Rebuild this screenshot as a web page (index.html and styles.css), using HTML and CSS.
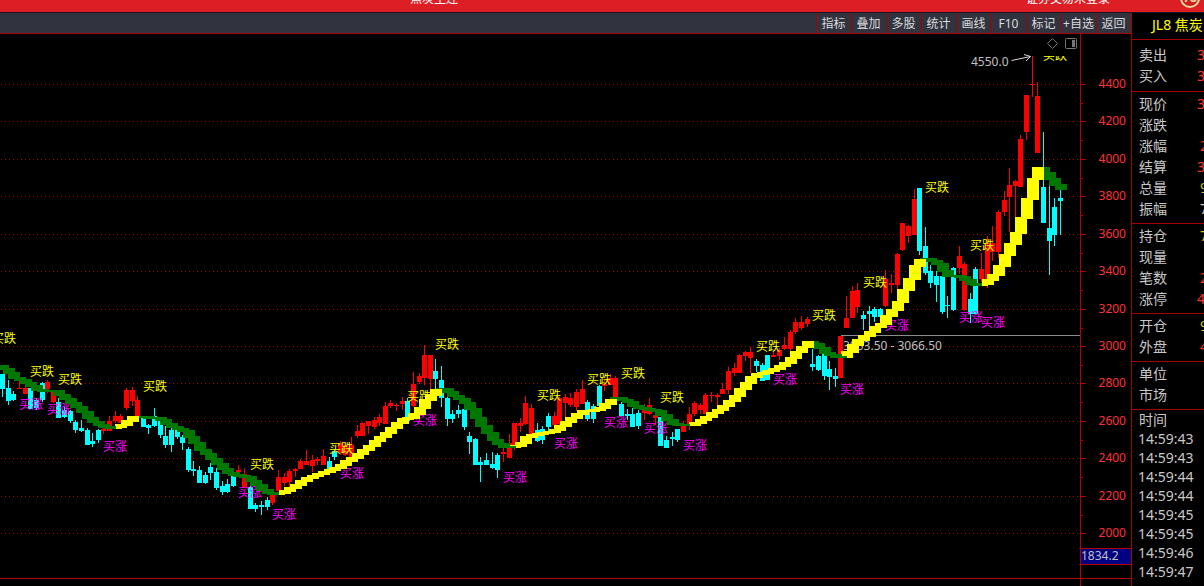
FILE: index.html
```html
<!DOCTYPE html>
<html lang="zh-CN">
<head>
<meta charset="utf-8">
<title>JL8 焦炭</title>
<link rel="stylesheet" href="styles.css">
</head>
<body>
<header class="titlebar">
  <span class="title-name">焦炭主连</span>
  <span class="title-status">证券交易未登录</span>
  <span class="title-badge">78</span>
</header>
<div class="workspace">
  <main class="main">
    <nav class="toolbar">
      <button type="button">指标</button>
      <button type="button">叠加</button>
      <button type="button">多股</button>
      <button type="button">统计</button>
      <button type="button">画线</button>
      <button type="button">F10</button>
      <button type="button">标记</button>
      <button type="button">+自选</button>
      <button type="button">返回</button>
    </nav>
    <svg class="chart" id="chart" viewBox="0 34 1131 552" preserveAspectRatio="xMinYMin meet">
      <defs><clipPath id="plot"><rect x="0" y="56" width="1080" height="520"/></clipPath></defs>
      <g id="grid"></g>
      <g id="candles"></g>
      <g id="notes">
        <path d="M841 335.5H1080" stroke="#8c8c8c"/>
        <text class="note" x="843" y="350">3053.50 - 3066.50</text>
        <text class="note" x="971" y="66">4550.0</text>
        <path class="arrow" d="M1011.5 60.5L1030.500 56.500M1024 54.500L1030.500 56.500L1026 61"/>
        <path class="glyph" d="M1047.500 43.500L1052.500 38.500L1057.500 43.500L1052.500 48.500Z"/>
        <rect class="glyph" x="1065.500" y="38.500" width="11" height="10" rx="1"/>
        <rect x="1072" y="40" width="3" height="7" fill="#777"/>
      </g>
      <g id="labels" clip-path="url(#plot)"></g>
      <g id="ribbon"></g>
      <g id="axis"></g>
    </svg>
  </main>
  <aside class="quote">
    <h1 class="quote-title">JL8 焦炭</h1>
    <dl class="group group-first">
      <div><dt>卖出</dt><dd>3</dd></div>
      <div><dt>买入</dt><dd>3</dd></div>
    </dl>
    <dl class="group">
      <div><dt>现价</dt><dd>3</dd></div>
      <div><dt>涨跌</dt><dd></dd></div>
      <div><dt>涨幅</dt><dd class="short">2</dd></div>
      <div><dt>结算</dt><dd>3</dd></div>
      <div><dt>总量</dt><dd class="short volume">9</dd></div>
      <div><dt>振幅</dt><dd class="short plain">7</dd></div>
    </dl>
    <dl class="group">
      <div><dt>持仓</dt><dd class="short volume">7</dd></div>
      <div><dt>现量</dt><dd></dd></div>
      <div><dt>笔数</dt><dd class="short">2</dd></div>
      <div><dt>涨停</dt><dd>4</dd></div>
    </dl>
    <dl class="group">
      <div><dt>开仓</dt><dd class="short volume">9</dd></div>
      <div><dt>外盘</dt><dd class="short">4</dd></div>
    </dl>
    <dl class="group">
      <div><dt>单位</dt><dd></dd></div>
      <div><dt>市场</dt><dd></dd></div>
    </dl>
    <h2 class="ticks-title">时间</h2>
    <ol class="ticks">
      <li>14:59:43</li><li>14:59:43</li><li>14:59:44</li><li>14:59:44</li>
      <li>14:59:45</li><li>14:59:45</li><li>14:59:46</li><li>14:59:47</li><li>14:59:48</li>
    </ol>
  </aside>
</div>
<script src="chart.js"></script>
</body>
</html>
```

FILE: styles.css
```css
* { box-sizing: border-box; }

body {
  margin: 0;
  height: 100vh;
  overflow: hidden;
  display: flex;
  flex-direction: column;
  background: #000;
  color: #c8c8c8;
  font-family: "Noto Sans", "Noto Sans CJK SC", sans-serif;
  font-size: 12px;
}

.titlebar {
  flex: none;
  display: flex;
  align-items: flex-end;
  height: 13px;
  overflow: hidden;
  background: #dd1e25;
  border-bottom: 1px solid #1c1420;
  color: #fff;
  line-height: 18px;
}
.title-name { margin-left: 410px; margin-bottom: 4px; }
.title-status { margin-left: auto; margin-bottom: 4px; }
.title-badge {
  flex: none;
  width: 20px;
  height: 20px;
  margin: 0 4px 4px 70px;
  border: 2px solid #f3d7a2;
  border-radius: 50%;
  background: #c8201c;
  color: #f3d7a2;
  font-weight: 700;
  line-height: 16px;
  text-align: center;
}

.workspace {
  flex: 1;
  min-height: 0;
  display: grid;
  grid-template-columns: minmax(0, 1fr) 73px;
}
.main {
  display: flex;
  flex-direction: column;
  min-height: 0;
}

.toolbar {
  flex: none;
  display: flex;
  justify-content: flex-end;
  height: 21px;
  background: #31333f;
  border-bottom: 1px solid #a80000;
}
.toolbar button {
  width: 35px;
  padding: 0 1px 0 0;
  border: 0;
  border-left: 1px solid #a80000;
  background: none;
  color: #dcdcdc;
  font: inherit;
  white-space: nowrap;
}

.chart {
  display: block;
  flex: 1;
  width: 100%;
  min-height: 0;
}
.chart text { font-size: 12px; }
.fall { fill: #ff0; }
.rise { fill: #f0f; }
.note { fill: #c0c0c0; }
.price { fill: #ff3232; text-anchor: end; }
.arrow { fill: none; stroke: #d8d8d8; }
.glyph { fill: none; stroke: #777; }
.gridline { stroke: #a00000; stroke-dasharray: 1 3; }
.frame { fill: none; stroke: #b40000; }
.cursor-box { fill: #000080; }

.quote {
  overflow: hidden;
  border-left: 1px solid #a80000;
  font-size: 14px;
  white-space: nowrap;
}
.quote-title {
  height: 27px;
  margin: 0;
  padding-left: 20px;
  border-bottom: 1px solid #a80000;
  color: #ff0;
  font-size: 14px;
  font-weight: 400;
  line-height: 24px;
}
.group {
  margin: 0;
  padding: 2px 0 3px 7px;
  border-bottom: 1px solid #a80000;
}
.group-first { padding: 5px 0 4px 7px; }
.group div {
  display: flex;
  height: 21px;
  line-height: 19px;
}
.group dt { width: 58px; flex: none; }
.group dd { margin: 0; color: #ff3232; }
.group .short { padding-left: 3px; }
.group .volume { color: #c8c800; }
.group .plain { color: #c8c8c8; }
.ticks-title {
  height: 19px;
  margin: 0;
  padding-left: 7px;
  font-size: 14px;
  font-weight: 400;
  line-height: 20px;
}
.ticks {
  margin: 0;
  padding: 0 0 0 6px;
  list-style: none;
  line-height: 19px;
}
```

FILE: chart.js
```js
// Each candle: x, high, body top, body bottom, low; "r" is red and "c" is cyan.
const candles = `
2 374 374 389 397 c|8 380 388 401 405 c|13 391 394 400 401 c|19 381 388 389 389 r|25 386 388 394 394 r
30 388 388 409 409 c|36 398 400 408 410 c|42 382 383 400 402 c|47 380 382 389 393 r|53 390 390 402 403 r
58 398 402 418 418 c|64 407 410 417 418 c|70 410 411 421 423 c|75 420 422 430 433 c|81 420 428 431 432 c
87 428 430 445 445 c|92 433 441 444 447 c|98 429 430 440 443 c|103 426 429 431 434 r|109 416 421 431 431 r
115 411 416 421 423 r|120 414 416 423 423 r|126 388 390 408 410 r|132 387 390 401 406 r|137 396 400 418 422 r
143 417 417 427 427 c|148 424 425 428 434 c|154 408 416 426 427 c|160 419 420 435 438 c|165 426 436 445 448 c
171 428 430 445 452 c|177 427 430 437 439 c|182 435 437 443 450 c|188 447 449 470 472 c|193 461 469 471 476 c
199 466 470 483 483 c|205 472 475 483 484 c|210 463 467 473 480 c|216 468 472 488 490 c|222 481 486 492 495 c
227 479 484 492 493 c|233 473 474 486 487 c|238 465 470 472 473 r|244 468 474 487 487 r|250 486 487 509 509 c
255 503 505 509 512 c|261 501 505 507 515 c|267 497 500 507 510 c|272 492 493 503 505 r|278 470 477 491 491 r
284 473 477 483 486 r|289 469 471 482 487 r|295 468 469 471 477 r|300 459 461 469 469 r|306 450 461 465 465 r
312 455 460 466 472 r|317 457 459 461 465 r|323 449 456 465 465 r|329 457 461 469 474 c|334 450 451 457 460 c
340 441 443 453 455 r|345 443 445 455 456 r|351 437 445 457 457 r|357 425 431 436 438 r|362 422 423 436 436 r
368 421 421 426 434 r|374 417 420 427 429 r|379 414 417 423 426 r|385 402 406 424 424 r|390 400 403 406 408 r
396 403 405 406 411 r|402 397 401 404 410 r|407 398 401 421 421 c|413 372 384 406 407 r|419 373 376 382 384 r
424 345 355 378 385 r|430 355 355 379 390 r|435 359 371 379 390 c|441 366 380 398 407 c|447 396 398 419 426 c
452 410 414 419 423 c|458 405 410 414 418 c|464 408 409 427 430 c|469 432 436 442 454 c|475 438 439 465 465 c
480 457 462 465 482 c|486 453 460 465 465 c|492 452 464 468 469 c|497 453 455 470 478 c|503 447 452 454 462 r
509 434 443 458 458 r|514 423 423 447 450 r|520 418 423 426 432 r|525 396 403 424 425 r|531 404 408 435 435 r
537 423 430 441 442 c|542 426 429 440 444 c|548 413 416 427 431 c|554 412 416 425 430 r|559 397 398 424 428 r
565 394 397 403 418 r|570 393 398 405 407 r|576 389 392 407 411 r|582 380 389 404 404 r|587 400 402 419 421 c
593 404 406 419 423 c|599 385 386 406 406 c|604 380 384 386 391 r|610 374 378 385 385 r|615 376 378 398 401 r
621 402 404 416 416 c|627 409 414 416 420 c|632 408 414 427 427 c|638 410 413 426 429 c|644 404 407 413 420 r
649 398 405 414 415 r|655 413 415 418 425 r|660 417 417 446 446 c|666 436 440 448 448 c|672 432 437 439 446 c
677 429 429 440 442 c|683 421 425 432 432 r|689 407 414 424 430 r|694 401 403 414 416 r|700 403 405 410 414 r
705 393 395 414 414 r|711 392 395 396 402 r|717 393 395 397 405 r|722 383 389 394 394 r|728 367 371 390 394 r
734 363 368 373 376 r|739 354 355 373 373 r|745 351 352 356 361 r|750 347 352 358 373 r|756 359 361 366 372 c
762 363 365 381 381 c|767 355 355 380 380 c|773 351 355 357 357 r|779 348 350 356 360 r|784 337 345 349 350 r
790 330 332 349 352 r|795 318 322 332 334 r|801 316 322 328 330 r|807 317 319 324 327 r|812 349 364 367 371 c
818 355 356 370 371 c|824 353 353 376 380 c|829 361 369 377 390 c|835 368 376 379 387 c|840 336 336 378 378 r
846 296 318 328 328 r|852 286 291 318 318 r|857 283 290 307 313 r|863 311 315 319 330 c|869 306 311 314 334 c
874 307 309 317 322 c|880 308 309 317 325 c|885 270 279 306 307 r|891 274 283 285 293 r|897 253 254 285 294 r
902 223 223 250 251 r|908 225 226 236 243 r|914 189 199 235 235 r|919 188 188 251 255 c|925 227 246 273 275 c
930 265 271 283 288 c|936 271 276 285 302 c|942 274 276 312 314 c|947 296 305 306 318 c|953 267 268 310 311 c
959 246 256 268 274 r|964 262 264 310 311 r|970 293 299 314 323 c|975 267 269 314 314 c|981 253 269 279 282 r
987 236 243 279 288 r|992 226 243 252 261 r|998 210 212 252 258 r|1004 191 200 212 216 r|1009 168 185 197 232 r
1015 180 181 186 218 r|1020 135 139 187 187 r|1026 95 95 132 140 r|1032 56 84 85 97 r|1037 82 96 153 153 r
1043 132 187 223 223 c|1049 184 228 241 275 c|1054 198 207 235 246 c|1060 188 198 201 235 c
`.trim().split(/[|\n]/).map(s => s.split(' ').map((v, i) => (i < 5 ? Number(v) : v)));

// Level of the trend ribbon at the left side of each candle, and after the last one.
const trend = [
  365, 368, 372, 377, 379, 382, 385, 389, 390, 390,
  390, 394, 398, 402, 406, 411, 417, 421, 424, 426,
  427, 426, 424, 420, 416, 416, 416, 417, 417, 419,
  423, 426, 428, 430, 436, 442, 449, 453, 458, 463,
  468, 472, 474, 475, 476, 480, 484, 489, 492, 493,
  492, 490, 487, 484, 480, 477, 475, 473, 471, 469,
  467, 464, 460, 457, 453, 449, 445, 440, 436, 432,
  427, 422, 418, 417, 413, 407, 399, 394, 389, 388,
  391, 395, 398, 402, 408, 417, 425, 432, 439, 443,
  446, 446, 445, 442, 436, 434, 433, 432, 431, 429,
  425, 421, 417, 413, 410, 410, 409, 407, 403, 399,
  397, 399, 401, 405, 407, 408, 409, 410, 414, 419,
  423, 424, 424, 424, 422, 419, 416, 412, 409, 405,
  400, 395, 388, 382, 376, 373, 372, 370, 368, 365,
  362, 357, 351, 346, 341, 343, 347, 352, 354, 356,
  356, 351, 344, 339, 335, 331, 326, 323, 315, 309,
  301, 289, 278, 265, 259, 258, 260, 263, 270, 275,
  275, 276, 279, 283, 284, 283, 279, 274, 265, 254,
  243, 232, 217, 198, 178, 167, 172, 178, 184, 188
];
const rising = [[20, 23], [49, 77], [91, 108], [122, 143], [150, 163], [174, 184]];

const fallLabels = [[-8, 338], [30, 371], [58, 379], [143, 386], [250, 464], [329, 448], [407, 396],
  [435, 344], [537, 395], [587, 379], [621, 373], [660, 397], [756, 346], [812, 315], [863, 282],
  [925, 187], [970, 245], [1043, 55]];
const riseLabels = [[19, 404], [47, 409], [103, 446], [238, 492], [272, 514], [340, 473], [413, 420],
  [503, 477], [554, 443], [604, 422], [644, 428], [683, 445], [773, 379], [840, 389], [885, 325],
  [959, 317], [981, 322]];
const prices = [[4400, 84], [4200, 121], [4000, 159], [3800, 196], [3600, 234], [3400, 271], [3200, 309],
  [3000, 346], [2800, 383], [2600, 421], [2400, 458], [2200, 496], [2000, 533]];

const box = (x, y, w, h) => `M${x} ${y}h${w}v${h}h${-w}z`;
const fill = (id, html) => { document.getElementById(id).innerHTML = html; };

const candlePath = kind => candles.filter(c => c[5] === kind).map(([x, high, top, bottom, low]) =>
  box(x, high, 1, low - high) + box(x - 2, top, 5, Math.max(1, bottom - top))).join('');
fill('candles', `<path fill="#f00" d="${candlePath('r')}"/><path fill="#0ff" d="${candlePath('c')}"/>`);

// Older steps lie over newer ones, so the colour changes at the end of a trend.
const isRising = i => rising.some(([from, to]) => i >= from && i <= to);
fill('ribbon', candles.map(([x], i) => {
  const top = Math.min(trend[i], trend[i + 1]);
  const height = Math.abs(trend[i + 1] - trend[i]) + 2;
  return `<path fill="${isRising(i) ? '#ff0' : '#007800'}" d="${box(x - 5, top, 12, height)}"/>`;
}).reverse().join(''));

const label = (kind, text) => ([x, y]) => `<text class="${kind}" x="${x}" y="${y + 5}">${text}</text>`;
fill('labels', riseLabels.map(label('rise', '买涨')).join('') + fallLabels.map(label('fall', '买跌')).join(''));

fill('grid', prices.map(([, y]) => `<path class="gridline" d="M1 ${y + 0.5}H1080"/>`).join(''));
fill('axis',
  prices.map(([p, y]) => `<path class="frame" d="M1081 ${y + 0.5}h5M1081 ${y + 19.5}h2"/>
    <text class="price" x="1126" y="${y + 4}">${p}</text>`).join('') +
  `<rect class="cursor-box" x="1081" y="548" width="50" height="16"/>
   <text class="note" x="1081" y="560">1834.2</text>
   <path class="frame" d="M1080.5 34V586M1081 548.5H1131M1081 564.5H1131M0 578.5H1131"/>`);
```
